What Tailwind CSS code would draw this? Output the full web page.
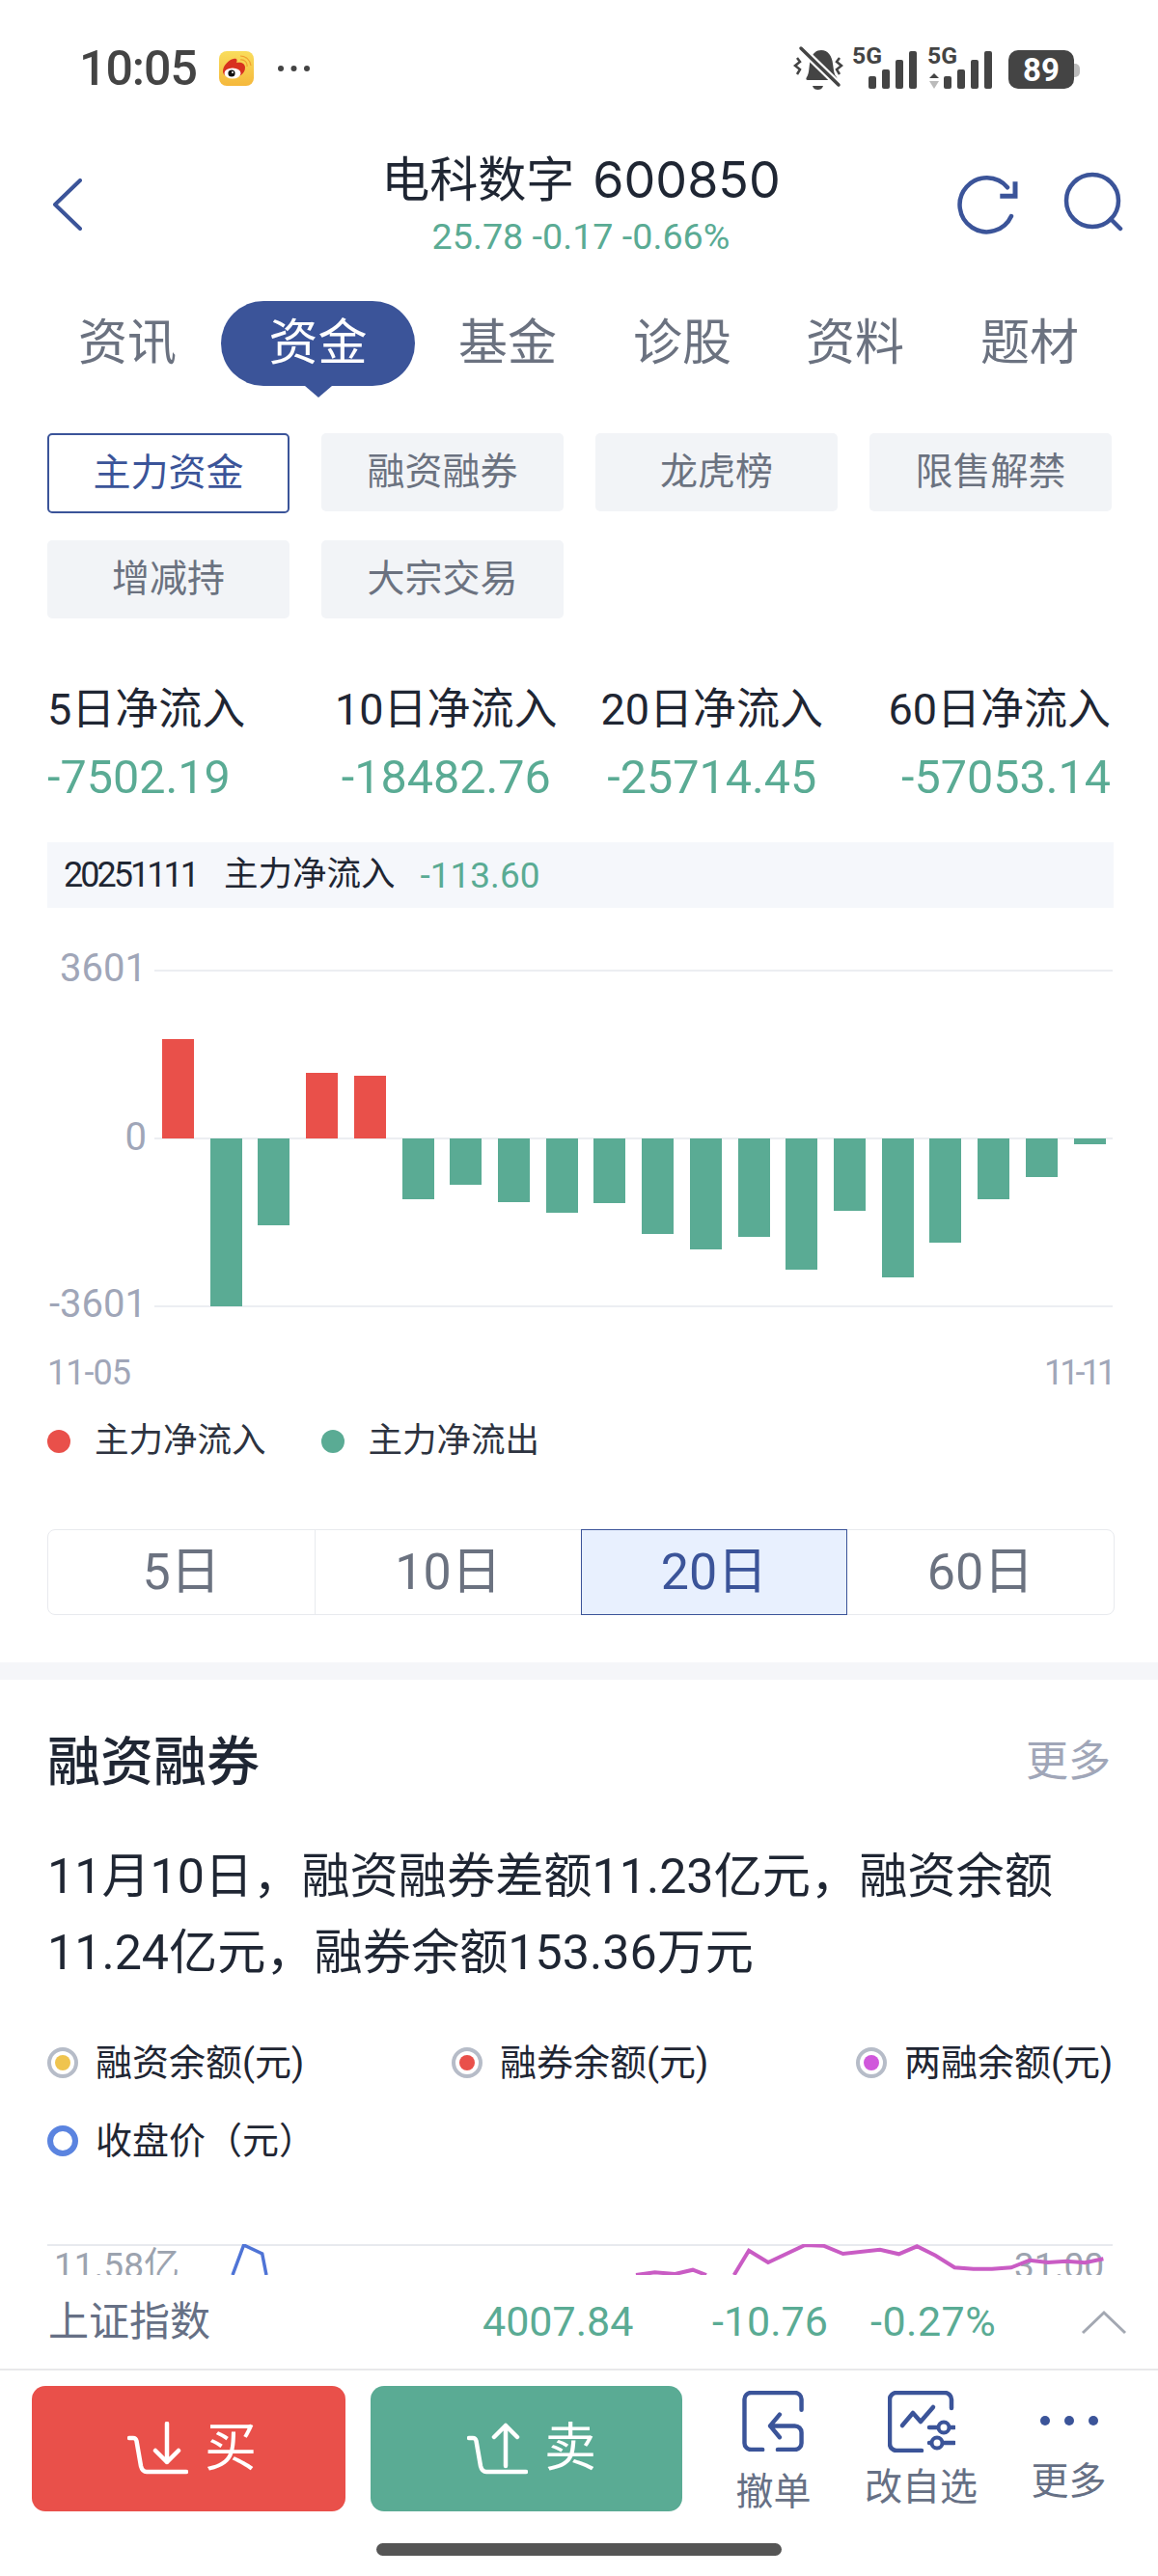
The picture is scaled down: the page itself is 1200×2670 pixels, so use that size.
<!DOCTYPE html>
<html lang="zh">
<head>
<meta charset="utf-8">
<script src="https://cdn.jsdelivr.net/npm/@tailwindcss/browser@4"></script>
</head>
<body class="bg-white">
<div class="w-[1200px] h-[2670px] overflow-hidden bg-white [font-family:Roboto,'Noto_Sans_CJK_SC',sans-serif] text-[#1f2633]">

  <!-- status bar -->
  <div class="h-[100px] pt-[41px] flex">
    <div class="h-[60px] pl-[82px] flex items-center">
      <span class="text-[50px] leading-none font-medium text-[#444444] tracking-[-1px]">10:05</span>
      <svg class="ml-[23px]" width="36" height="36" viewBox="0 0 36 36">
        <defs><linearGradient id="wb" x1="0" y1="0" x2="0" y2="1"><stop offset="0" stop-color="#f9dd5c"/><stop offset="1" stop-color="#f5b83c"/></linearGradient></defs>
        <rect width="36" height="36" rx="8" fill="url(#wb)"/>
        <path d="M22 9a6 6 0 0 1 7 7M22 5a11 11 0 0 1 11 10" fill="none" stroke="#f0a030" stroke-width="1.2"/>
        <path d="M4 21c0-6 6-12 11-13 4-1 4 2 3 4 4-1 9 0 9 5 0 7-7 10-12 10-6 0-11-2-11-6z" fill="#d8301f"/>
        <ellipse cx="14" cy="23" rx="8.5" ry="5.5" fill="#fff"/>
        <circle cx="13" cy="23" r="3.6" fill="#111"/>
        <circle cx="14" cy="22" r="1" fill="#fff"/>
      </svg>
      <svg class="ml-[24px]" width="35" height="10" viewBox="0 0 35 10"><circle cx="4" cy="5" r="3" fill="#444"/><circle cx="17.5" cy="5" r="3" fill="#444"/><circle cx="31" cy="5" r="3" fill="#444"/></svg>
    </div>
    <svg class="absolute left-[820px] top-[45px]" width="302" height="52" viewBox="820 45 302 52">
      <path d="M836 80c3-4 2-12 4-18 2-7 6-10 11-10 7 0 11 6 12 14 1 6 1 11 4 14 1 2 0 3-2 3h-28c-2 0-2-2-1-3z" fill="#444"/>
      <path d="M842 89h11c-1 3-3 4-5.500 4s-4.500-1-5.500-4z" fill="#444"/>
      <path d="M829 49l40 39" stroke="#fff" stroke-width="8"/>
      <path d="M830 50l39 38" stroke="#444" stroke-width="3.500" stroke-linecap="round"/>
      <path d="M826 60l3 4-5 4 5 4-3 5M870 60l-3 4 5 4-5 4 3 5" fill="none" stroke="#444" stroke-width="2.500"/>
      <text x="883" y="66" class="text-[24px] font-bold [font-family:Roboto,sans-serif]" fill="#444" textLength="31" lengthAdjust="spacingAndGlyphs">5G</text>
      <rect x="900" y="79" width="8" height="13" rx="2" fill="#444"/><rect x="914" y="72" width="8" height="20" rx="2" fill="#444"/><rect x="928" y="62" width="8" height="30" rx="2" fill="#444"/><rect x="942" y="53" width="8" height="39" rx="2" fill="#444"/>
      <text x="961" y="66" class="text-[24px] font-bold [font-family:Roboto,sans-serif]" fill="#444" textLength="31" lengthAdjust="spacingAndGlyphs">5G</text>
      <path d="M968 76l5 5h-10z" fill="#444"/><path d="M963 84h10l-5 8z" fill="#bbb"/>
      <rect x="978" y="79" width="8" height="13" rx="2" fill="#444"/><rect x="992" y="72" width="8" height="20" rx="2" fill="#444"/><rect x="1006" y="62" width="8" height="30" rx="2" fill="#444"/><rect x="1020" y="53" width="8" height="39" rx="2" fill="#444"/>
      <path d="M1112 66h2a5 5 0 0 1 5 5v4a5 5 0 0 1-5 5h-2z" fill="#bbbbbb"/>
      <rect x="1045" y="52" width="68" height="40" rx="10" fill="#444"/>
      <text x="1079" y="84" text-anchor="middle" class="text-[33px] font-bold [font-family:Roboto,sans-serif]" fill="#fff">89</text>
    </svg>
  </div>

  <!-- header -->
  <div class="h-[190px] grid grid-cols-[397px_410px_393px]">
    <div class="pl-[55px] pt-[85px]">
      <svg width="30" height="54" viewBox="0 0 30 54"><path d="M28 2L2 27l26 25" fill="none" stroke="#3b5499" stroke-width="4" stroke-linecap="round" stroke-linejoin="round"/></svg>
    </div>
    <div class="flex flex-col items-center">
      <div class="mt-[56px] h-[62px] flex items-center whitespace-nowrap text-[50px] leading-none text-[#1f2633]"><span>电科数字</span><span class="ml-[19px] [font-family:Inter,sans-serif] text-[52px]">600850</span></div>
      <div class="mt-[8px] h-[40px] flex items-center whitespace-nowrap text-[37.7px] leading-none text-[#5aab94]">25.78 -0.17 -0.66%</div>
    </div>
    <div class="flex items-start">
      <svg class="ml-[185px] mt-[81px]" width="66" height="66" viewBox="0 0 66 66">
        <path d="M56 43A28 28 0 1 1 52 13.300" fill="none" stroke="#3b5499" stroke-width="4.500" stroke-linecap="round"/>
        <path d="M60 7.300v15H44.300" fill="none" stroke="#3b5499" stroke-width="5"/>
      </svg>
      <svg class="ml-[40px] mt-[76px]" width="66" height="66" viewBox="0 0 66 66">
        <circle cx="34" cy="32" r="27" fill="none" stroke="#3b5499" stroke-width="4.500"/>
        <path d="M53 51l10 10" stroke="#3b5499" stroke-width="4.500" stroke-linecap="round"/>
      </svg>
    </div>
  </div>

  <!-- tabs -->
  <div class="mt-[22px] h-[100px] flex items-start text-[51px] leading-[88px] text-[#6b7280] pl-[81px] whitespace-nowrap">
    <span>资讯</span>
    <div class="ml-[46px] w-[201px] flex flex-col items-center">
      <div class="w-[201px] h-[88px] rounded-[44px] bg-[#3b5499] text-white text-center">资金</div>
      <div class="w-0 h-0 border-x-[14px] border-x-transparent border-t-[12px] border-t-[#3b5499]"></div>
    </div>
    <span class="ml-[45px]">基金</span>
    <span class="ml-[79px]">诊股</span>
    <span class="ml-[77px]">资料</span>
    <span class="ml-[79px]">题材</span>
  </div>

  <!-- sub buttons -->
  <div class="mt-[37px] mx-[49px] grid grid-cols-[251px_251px_251px_251px] gap-x-[33px] gap-y-[28px] text-[39px] text-[#6b7280]">
    <div class="h-[83px] rounded-[5px] border-2 border-[#3b5499] text-[#3b5499] flex items-center justify-center">主力资金</div>
    <div class="h-[81px] rounded-[5px] bg-[#f2f4f7] flex items-center justify-center">融资融券</div>
    <div class="h-[81px] rounded-[5px] bg-[#f2f4f7] flex items-center justify-center">龙虎榜</div>
    <div class="h-[81px] rounded-[5px] bg-[#f2f4f7] flex items-center justify-center">限售解禁</div>
    <div class="h-[81px] rounded-[5px] bg-[#f2f4f7] flex items-center justify-center">增减持</div>
    <div class="h-[81px] rounded-[5px] bg-[#f2f4f7] flex items-center justify-center">大宗交易</div>
  </div>

  <!-- stats -->
  <div class="mt-[70px] mx-[49px] grid grid-cols-4 whitespace-nowrap">
    <div class="text-left"><div class="h-[50px] leading-[50px] text-[45px]">5日净流入</div><div class="mt-[20px] h-[50px] leading-[50px] text-[48.5px] text-[#5aab94]">-7502.19</div></div>
    <div class="text-center"><div class="h-[50px] leading-[50px] text-[45px]">10日净流入</div><div class="mt-[20px] h-[50px] leading-[50px] text-[48.5px] text-[#5aab94]">-18482.76</div></div>
    <div class="text-center"><div class="h-[50px] leading-[50px] text-[45px]">20日净流入</div><div class="mt-[20px] h-[50px] leading-[50px] text-[48.5px] text-[#5aab94]">-25714.45</div></div>
    <div class="text-right"><div class="h-[50px] leading-[50px] text-[45px]">60日净流入</div><div class="mt-[20px] h-[50px] leading-[50px] text-[48.5px] text-[#5aab94]">-57053.14</div></div>
  </div>

  <!-- info strip -->
  <div class="mt-[42px] ml-[49px] w-[1105px] h-[68px] bg-[#f5f7fb] flex items-center pl-[17px] whitespace-nowrap leading-none">
    <span class="text-[36px] tracking-[-3px] w-[136px]">20251111</span>
    <span class="ml-[30px] text-[35.5px]">主力净流入</span>
    <span class="ml-[26px] text-[37px] text-[#5aab94]">-113.60</span>
  </div>

  <!-- bar chart -->
  <svg class="block" width="1200" height="509" viewBox="0 941 1200 509">
    <g stroke="#eceef2" stroke-width="2"><path d="M160 1006H1153"/><path d="M160 1180H1153"/><path d="M160 1354H1153"/></g>
    <g class="text-[40px]" fill="#a0a6b8">
      <text x="152" y="1017" text-anchor="end">3601</text>
      <text x="152" y="1192" text-anchor="end">0</text>
      <text x="152" y="1365" text-anchor="end">-3601</text>
    </g>
    <g class="text-[36px]" fill="#a0a6b8">
      <text x="49" y="1435" class="tracking-[-1px]">11-05</text>
      <text x="1153" y="1435" text-anchor="end" class="tracking-[-4px]">11-11</text>
    </g>
    <g fill="#e9504a">
      <rect x="168" y="1077" width="33" height="103"/>
      <rect x="317" y="1112" width="33" height="68"/>
      <rect x="367" y="1115" width="33" height="65"/>
    </g>
    <g fill="#5aab94">
      <rect x="218" y="1180" width="33" height="174"/>
      <rect x="267" y="1180" width="33" height="90"/>
      <rect x="417" y="1180" width="33" height="63"/>
      <rect x="466" y="1180" width="33" height="48"/>
      <rect x="516" y="1180" width="33" height="66"/>
      <rect x="566" y="1180" width="33" height="77"/>
      <rect x="615" y="1180" width="33" height="67"/>
      <rect x="665" y="1180" width="33" height="99"/>
      <rect x="715" y="1180" width="33" height="115"/>
      <rect x="765" y="1180" width="33" height="102"/>
      <rect x="814" y="1180" width="33" height="136"/>
      <rect x="864" y="1180" width="33" height="75"/>
      <rect x="914" y="1180" width="33" height="144"/>
      <rect x="963" y="1180" width="33" height="108"/>
      <rect x="1013" y="1180" width="33" height="63"/>
      <rect x="1063" y="1180" width="33" height="40"/>
      <rect x="1113" y="1180" width="33" height="6"/>
    </g>
  </svg>

  <!-- legend -->
  <div class="mt-[24px] ml-[49px] h-[40px] flex items-center text-[35.5px] leading-none text-[#2d3340] whitespace-nowrap">
    <span class="w-[24px] h-[24px] rounded-full bg-[#e9504a]"></span>
    <span class="ml-[25px]">主力净流入</span>
    <span class="ml-[57px] w-[24px] h-[24px] rounded-full bg-[#5aab94]"></span>
    <span class="ml-[25px]">主力净流出</span>
  </div>

  <!-- period switch -->
  <div class="mt-[71px] ml-[49px] w-[1106px] h-[89px] grid grid-cols-4 text-[52px] text-[#6b7280] rounded-[8px] border border-[#e8eaee]">
    <div class="flex items-center justify-center">5日</div>
    <div class="flex items-center justify-center border-l border-[#e8eaee]">10日</div>
    <div class="flex items-center justify-center bg-[#e8f0fe] border border-[#3b5499] -my-px text-[#3b5499]">20日</div>
    <div class="flex items-center justify-center">60日</div>
  </div>

  <div class="mt-[49px] h-[18px] bg-[#f5f6f9]"></div>

  <!-- section -->
  <div class="mt-[55px] mx-[49px] h-[60px] flex items-center justify-between leading-none">
    <span class="text-[55px] font-medium">融资融券</span>
    <span class="text-[44px] text-[#a0a6b8]">更多</span>
  </div>
  <p class="mt-[49px] mx-[49px] text-[50.2px] leading-[79px] whitespace-nowrap">11月10日，融资融券差额11.23亿元，融资余额<br>11.24亿元，融券余额153.36万元</p>

  <!-- legend 2 -->
  <div class="mt-[55px] ml-[49px] h-[40px] flex items-center text-[38px] leading-none whitespace-nowrap">
    <span class="w-[32px] h-[32px] rounded-full border-[4px] border-[#b6bcc8] flex items-center justify-center"><span class="w-[16px] h-[16px] rounded-full bg-[#efc44f]"></span></span>
    <span class="ml-[18px] w-[369px]">融资余额(元)</span>
    <span class="w-[32px] h-[32px] rounded-full border-[4px] border-[#b6bcc8] flex items-center justify-center"><span class="w-[16px] h-[16px] rounded-full bg-[#e9504a]"></span></span>
    <span class="ml-[18px] w-[369px]">融券余额(元)</span>
    <span class="w-[32px] h-[32px] rounded-full border-[4px] border-[#b6bcc8] flex items-center justify-center"><span class="w-[16px] h-[16px] rounded-full bg-[#d058db]"></span></span>
    <span class="ml-[18px]">两融余额(元)</span>
  </div>
  <div class="mt-[41px] ml-[49px] h-[40px] flex items-center text-[38px] leading-none whitespace-nowrap">
    <span class="w-[32px] h-[32px] rounded-full border-[6px] border-[#5b84e0]"></span>
    <span class="ml-[18px]">收盘价（元）</span>
  </div>

  <!-- clipped chart -->
  <svg class="block mt-[87px]" width="1200" height="32" viewBox="0 2325 1200 32">
    <path d="M49 2326H1153" stroke="#e8eaee" stroke-width="2"/>
    <text x="56" y="2360" class="text-[37px]" fill="#9ca3af">11.58亿</text>
    <text x="1144" y="2360" text-anchor="end" class="text-[37px]" fill="#9ca3af">31.00</text>
    <polyline points="241,2357 252.600,2326 271.700,2335 276,2357" fill="none" stroke="#4f74d6" stroke-width="3.500"/>
    <polyline points="659,2357 678.500,2354.300 699.500,2356 717.900,2351.700 732,2357" fill="none" stroke="#c95cc4" stroke-width="4"/>
    <polyline points="760.700,2357 776,2331.700 796,2344 834.200,2326 853.400,2326.700 873.600,2335 911.900,2330.700 931.400,2335.300 950.200,2327.300 969.300,2336.700 989.200,2349.300 1008.700,2350.700 1027.900,2350.700 1047.800,2349.300 1066.900,2341.700 1086,2344 1105.200,2342.700 1124.300,2344.300 1143.400,2340.300" fill="none" stroke="#c95cc4" stroke-width="4"/>
  </svg>

  <!-- index row -->
  <div class="h-[99px] border-b-2 border-[#e8e8ea] flex items-center whitespace-nowrap leading-none">
    <span class="ml-[50px] w-[450px] text-[42px] text-[#667085]">上证指数</span>
    <span class="w-[238px] text-[43px] text-[#5aab94]">4007.84</span>
    <span class="w-[164px] text-[43px] text-[#5aab94]">-10.76</span>
    <span class="w-[218px] text-[43px] text-[#5aab94] tracking-[0.5px]">-0.27%</span>
    <svg width="48" height="26" viewBox="0 0 48 26"><path d="M2 24L24 3l22 21" fill="none" stroke="#a3a8b2" stroke-width="3"/></svg>
  </div>

  <!-- action row -->
  <div class="mt-[16px] h-[130px] pl-[33px] flex">
    <div class="w-[325px] h-[130px] rounded-[14px] bg-[#e9504a] flex items-center pl-[99px] text-white">
      <svg width="63" height="56" viewBox="0 0 63 56"><path d="M2 17h4c2 0 3 1 3.500 3L14 46c1 4 3 6 6 6h41" fill="none" stroke="#fff" stroke-width="4.500" stroke-linecap="round"/><path d="M41 2v40M29 30l12 12 12-12" fill="none" stroke="#fff" stroke-width="4.500" stroke-linecap="round" stroke-linejoin="round"/></svg>
      <span class="ml-[17px] text-[54px] leading-none">买</span>
    </div>
    <div class="ml-[26px] w-[323px] h-[130px] rounded-[14px] bg-[#5aab94] flex items-center pl-[100px] text-white">
      <svg width="63" height="56" viewBox="0 0 63 56"><path d="M2 17h4c2 0 3 1 3.500 3L14 46c1 4 3 6 6 6h41" fill="none" stroke="#fff" stroke-width="4.500" stroke-linecap="round"/><path d="M40 46V4M28 16L40 4l12 12" fill="none" stroke="#fff" stroke-width="4.500" stroke-linecap="round" stroke-linejoin="round"/></svg>
      <span class="ml-[17px] text-[54px] leading-none">卖</span>
    </div>
    <div class="ml-[18px] w-[153px] flex flex-col items-center text-[39px] leading-none text-[#667085]">
      <svg class="mt-[5px]" width="66" height="64" viewBox="0 0 66 64"><path d="M62 20V9a7 7 0 0 0-7-7H9a7 7 0 0 0-7 7v46a7 7 0 0 0 7 7h12" fill="none" stroke="#3b5499" stroke-width="4.500" stroke-linecap="round"/><path d="M39 25L29 37l10 12M29 37h26a7 7 0 0 1 7 7v11a7 7 0 0 1-7 7H37" fill="none" stroke="#3b5499" stroke-width="4.500" stroke-linecap="round" stroke-linejoin="round"/></svg>
      <span class="mt-[23px]">撤单</span>
    </div>
    <div class="w-[153px] flex flex-col items-center text-[39px] leading-none text-[#667085]">
      <svg class="mt-[5px]" width="70" height="64" viewBox="0 0 70 64"><path d="M66 18V9a7 7 0 0 0-7-7H9a7 7 0 0 0-7 7v46a7 7 0 0 0 7 7h26" fill="none" stroke="#3b5499" stroke-width="4.500" stroke-linecap="round"/><path d="M15 36l11-13 8 9 13-15" fill="none" stroke="#3b5499" stroke-width="4.500" stroke-linecap="round" stroke-linejoin="round"/><path d="M43 38h26M43 54h26" stroke="#3b5499" stroke-width="4.500" stroke-linecap="round"/><circle cx="58" cy="38" r="5.500" fill="#fff" stroke="#3b5499" stroke-width="4"/><circle cx="51" cy="54" r="5.500" fill="#fff" stroke="#3b5499" stroke-width="4"/></svg>
      <span class="mt-[17px]">改自选</span>
    </div>
    <div class="w-[153px] flex flex-col items-center text-[39px] leading-none text-[#667085]">
      <svg class="mt-[30px]" width="62" height="12" viewBox="0 0 62 12"><circle cx="6" cy="6" r="5" fill="#3b5499"/><circle cx="31" cy="6" r="5" fill="#3b5499"/><circle cx="56" cy="6" r="5" fill="#3b5499"/></svg>
      <span class="mt-[38px]">更多</span>
    </div>
  </div>

  <div class="mt-[33px] ml-[390px] w-[420px] h-[13px] rounded-full bg-[#555555]"></div>
</div>
</body>
</html>
